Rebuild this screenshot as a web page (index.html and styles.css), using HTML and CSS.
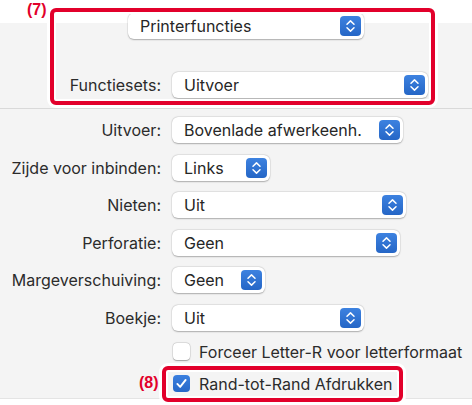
FILE: index.html
```html
<!DOCTYPE HTML>
<html>
<head>
<meta charset="utf-8">
<meta name="viewport" content="width=device-width,initial-scale=1.0">
<title>Printerfuncties</title>
<link rel="stylesheet" href="styles.css">
</head>
<body>
<div class="sheet">
    <section class="features">
        <div class="popup popup-main">
            <span class="value">Printerfuncties</span>
            <span class="stepper"><svg viewBox="0 0 20 20"><path d="M6.5 8.2 L10 4.9 L13.5 8.2 M6.5 11.8 L10 15.1 L13.5 11.8"/></svg></span>
        </div>
        <div class="row row-sets">
            <span class="label">Functiesets:</span>
            <div class="popup w-sets">
                <span class="value">Uitvoer</span>
                <span class="stepper"><svg viewBox="0 0 20 20"><path d="M6.5 8.2 L10 4.9 L13.5 8.2 M6.5 11.8 L10 15.1 L13.5 11.8"/></svg></span>
            </div>
        </div>
    </section>

    <section class="options">
        <div class="row">
            <span class="label">Uitvoer:</span>
            <div class="popup w-output">
                <span class="value">Bovenlade afwerkeenh.</span>
                <span class="stepper"><svg viewBox="0 0 20 20"><path d="M6.5 8.2 L10 4.9 L13.5 8.2 M6.5 11.8 L10 15.1 L13.5 11.8"/></svg></span>
            </div>
        </div>
        <div class="row">
            <span class="label">Zijde voor inbinden:</span>
            <div class="popup w-side">
                <span class="value">Links</span>
                <span class="stepper"><svg viewBox="0 0 20 20"><path d="M6.5 8.2 L10 4.9 L13.5 8.2 M6.5 11.8 L10 15.1 L13.5 11.8"/></svg></span>
            </div>
        </div>
        <div class="row">
            <span class="label">Nieten:</span>
            <div class="popup w-staple">
                <span class="value">Uit</span>
                <span class="stepper"><svg viewBox="0 0 20 20"><path d="M6.5 8.2 L10 4.9 L13.5 8.2 M6.5 11.8 L10 15.1 L13.5 11.8"/></svg></span>
            </div>
        </div>
        <div class="row">
            <span class="label">Perforatie:</span>
            <div class="popup w-punch">
                <span class="value">Geen</span>
                <span class="stepper"><svg viewBox="0 0 20 20"><path d="M6.5 8.2 L10 4.9 L13.5 8.2 M6.5 11.8 L10 15.1 L13.5 11.8"/></svg></span>
            </div>
        </div>
        <div class="row">
            <span class="label">Margeverschuiving:</span>
            <div class="popup w-margin">
                <span class="value">Geen</span>
                <span class="stepper"><svg viewBox="0 0 20 20"><path d="M6.5 8.2 L10 4.9 L13.5 8.2 M6.5 11.8 L10 15.1 L13.5 11.8"/></svg></span>
            </div>
        </div>
        <div class="row">
            <span class="label">Boekje:</span>
            <div class="popup w-booklet">
                <span class="value">Uit</span>
                <span class="stepper"><svg viewBox="0 0 20 20"><path d="M6.5 8.2 L10 4.9 L13.5 8.2 M6.5 11.8 L10 15.1 L13.5 11.8"/></svg></span>
            </div>
        </div>
        <label class="check check-first">
            <span class="box"></span>
            <span class="text">Forceer Letter-R voor letterformaat</span>
        </label>
        <label class="check check-second">
            <span class="box checked"><svg viewBox="0 0 18 18"><path d="M4.6 9.4 L7.6 12.6 L13.4 5.2"/></svg></span>
            <span class="text">Rand-tot-Rand Afdrukken</span>
        </label>
    </section>

    <span class="callout callout-7">(7)</span>
    <div class="mark mark-7"></div>
    <span class="callout callout-8">(8)</span>
    <div class="mark mark-8"></div>
</div>
</body>
</html>
```

FILE: styles.css
```css
html, body { margin:0; padding:0; background:#fff; }
body { font-family: "Inter", "Liberation Sans", sans-serif; font-size:16px; color:#2b2b2b; }

.sheet { position:relative; width:472px; height:405px; overflow:hidden; background:#fff; }

/* top block: feature selector */
.features { height:95px; padding-top:13px; background:linear-gradient(#fff 23px, #f4f4f4 23px); border-bottom:1px solid #d9d9d9; }
.popup-main { width:236px; height:25px; margin-left:128px; }
.row-sets { margin-top:33px; }

/* options block */
.options { height:281px; padding-top:8px; background:#f4f4f4; border-bottom:1px solid #e4e4e4; }
.options .row + .row { margin-top:11.5px; }

.row { display:flex; align-items:center; height:26px; }
.label { width:172px; padding-right:11px; box-sizing:border-box; text-align:right; white-space:nowrap; }

.popup { display:flex; align-items:center; justify-content:space-between; box-sizing:border-box; height:26px; padding:0 3px 0 12px; background:#fff; border-radius:6px; box-shadow:0 0.5px 1.5px rgba(0,0,0,.28), 0 0 0 0.5px rgba(0,0,0,.06); white-space:nowrap; }
.value { color:#262626; }
.stepper { display:flex; width:21px; height:20px; border-radius:4px; background:linear-gradient(#3d82e0, #2566c6); }
.stepper svg { width:21px; height:20px; }
.stepper path { fill:none; stroke:#fff; stroke-width:1.5; stroke-linecap:round; stroke-linejoin:round; }

.w-sets { width:256px; }
.w-output { width:231px; }
.w-side { width:98px; }
.w-staple { width:234px; }
.w-punch { width:228px; }
.w-margin { width:93px; }
.w-booklet { width:192px; }

/* checkboxes */
.check { display:flex; align-items:center; height:18px; padding-left:173px; }
.check-first { margin-top:12px; }
.check-second { margin-top:14px; }
.box { display:flex; width:17px; height:17px; margin-right:9px; box-sizing:border-box; border-radius:4px; background:#fff; box-shadow:0 0.5px 1.2px rgba(0,0,0,.3), 0 0 0 0.5px rgba(0,0,0,.12); }
.box.checked { background:linear-gradient(#3b80df, #2767c7); box-shadow:none; }
.box svg { width:17px; height:17px; }
.box path { fill:none; stroke:#fff; stroke-width:2; stroke-linecap:round; stroke-linejoin:round; }

/* red annotations laid over the dialog */
.mark { position:absolute; box-sizing:border-box; border:4px solid #e2002b; border-radius:6px; box-shadow:0 0 0 3px #fff, inset 0 0 0 2px #fff; }
.mark-7 { left:50px; top:8px; width:385px; height:97px; }
.mark-8 { left:162px; top:366px; width:241px; height:36px; }
.callout { position:absolute; color:#e2002b; font-family:"Liberation Sans", sans-serif; font-weight:bold; font-size:16px; }
.callout-7 { left:27px; top:1px; }
.callout-8 { left:139px; top:374px; }
```
